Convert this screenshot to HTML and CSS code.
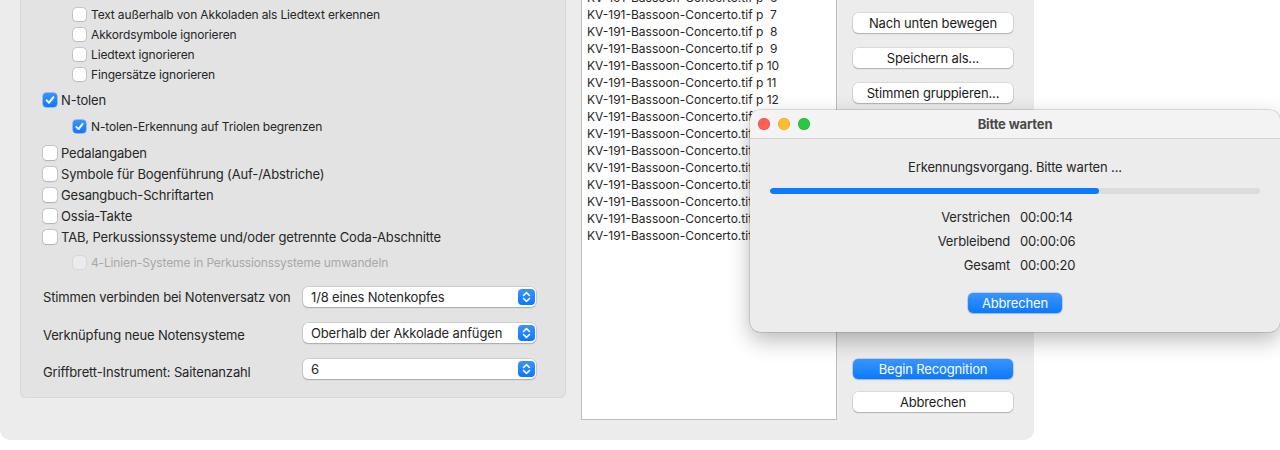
FILE: index.html
```html
<!DOCTYPE html>
<html lang="de">
<head>
<meta charset="utf-8">
<title>Erkennung</title>
<link rel="stylesheet" href="styles.css">
</head>
<body>
<div class="window">
  <div class="group">
    <div class="opts">
      <div class="row sub small r1"><span class="cb"></span><span>Text außerhalb von Akkoladen als Liedtext erkennen</span></div>
      <div class="row sub small"><span class="cb"></span><span>Akkordsymbole ignorieren</span></div>
      <div class="row sub small"><span class="cb"></span><span>Liedtext ignorieren</span></div>
      <div class="row sub small"><span class="cb"></span><span>Fingersätze ignorieren</span></div>
      <div class="row mid gap6"><span class="cb on"><svg viewBox="0 0 14 14" width="14" height="14"><path d="M3.6 7.4 L6 9.8 L10.4 4.2" fill="none" stroke="#fff" stroke-width="2" stroke-linecap="round" stroke-linejoin="round"/></svg></span><span>N-tolen</span></div>
      <div class="row sub small mid gap6"><span class="cb on"><svg viewBox="0 0 14 14" width="14" height="14"><path d="M3.6 7.4 L6 9.8 L10.4 4.2" fill="none" stroke="#fff" stroke-width="2" stroke-linecap="round" stroke-linejoin="round"/></svg></span><span>N-tolen-Erkennung auf Triolen begrenzen</span></div>
      <div class="row big gap6"><span class="cb"></span><span>Pedalangaben</span></div>
      <div class="row big"><span class="cb"></span><span>Symbole für Bogenführung (Auf-/Abstriche)</span></div>
      <div class="row big"><span class="cb"></span><span>Gesangbuch-Schriftarten</span></div>
      <div class="row big"><span class="cb"></span><span>Ossia-Takte</span></div>
      <div class="row big"><span class="cb"></span><span>TAB, Perkussionssysteme und/oder getrennte Coda-Abschnitte</span></div>
      <div class="row sub small disabled gap5"><span class="cb"></span><span>4-Linien-Systeme in Perkussionssysteme umwandeln</span></div>
    </div>
    <div class="form">
      <div class="frow">
        <span class="flabel">Stimmen verbinden bei Notenversatz von</span>
        <div class="popup"><span>1/8 eines Notenkopfes</span><span class="stepper"><svg viewBox="0 0 17 16" width="17" height="16"><path d="M5.5 6.5 L8.5 3.6 L11.5 6.5 M5.5 9.5 L8.5 12.4 L11.5 9.5" fill="none" stroke="#fff" stroke-width="1.6" stroke-linecap="round" stroke-linejoin="round"/></svg></span></div>
      </div>
      <div class="frow">
        <span class="flabel low2">Verknüpfung neue Notensysteme</span>
        <div class="popup"><span>Oberhalb der Akkolade anfügen</span><span class="stepper"><svg viewBox="0 0 17 16" width="17" height="16"><path d="M5.5 6.5 L8.5 3.6 L11.5 6.5 M5.5 9.5 L8.5 12.4 L11.5 9.5" fill="none" stroke="#fff" stroke-width="1.6" stroke-linecap="round" stroke-linejoin="round"/></svg></span></div>
      </div>
      <div class="frow">
        <span class="flabel low3">Griffbrett-Instrument: Saitenanzahl</span>
        <div class="popup"><span>6</span><span class="stepper"><svg viewBox="0 0 17 16" width="17" height="16"><path d="M5.5 6.5 L8.5 3.6 L11.5 6.5 M5.5 9.5 L8.5 12.4 L11.5 9.5" fill="none" stroke="#fff" stroke-width="1.6" stroke-linecap="round" stroke-linejoin="round"/></svg></span></div>
      </div>
    </div>
  </div>

  <div class="list">
    <div class="item first">KV-191-Bassoon-Concerto.tif p  6</div>
    <div class="item">KV-191-Bassoon-Concerto.tif p  7</div>
    <div class="item">KV-191-Bassoon-Concerto.tif p  8</div>
    <div class="item">KV-191-Bassoon-Concerto.tif p  9</div>
    <div class="item">KV-191-Bassoon-Concerto.tif p 10</div>
    <div class="item">KV-191-Bassoon-Concerto.tif p 11</div>
    <div class="item">KV-191-Bassoon-Concerto.tif p 12</div>
    <div class="item">KV-191-Bassoon-Concerto.tif p 13</div>
    <div class="item">KV-191-Bassoon-Concerto.tif p 14</div>
    <div class="item">KV-191-Bassoon-Concerto.tif p 15</div>
    <div class="item">KV-191-Bassoon-Concerto.tif p 16</div>
    <div class="item">KV-191-Bassoon-Concerto.tif p 17</div>
    <div class="item">KV-191-Bassoon-Concerto.tif p 18</div>
    <div class="item">KV-191-Bassoon-Concerto.tif p 19</div>
    <div class="item">KV-191-Bassoon-Concerto.tif p 20</div>
  </div>

  <div class="buttons">
    <div class="btn">Nach unten bewegen</div>
    <div class="btn">Speichern als...</div>
    <div class="btn">Stimmen gruppieren...</div>
    <div class="btn primary push">Begin Recognition</div>
    <div class="btn">Abbrechen</div>
  </div>
</div>

<div class="dialog">
  <div class="titlebar">
    <div class="lights"><span class="light red"></span><span class="light yellow"></span><span class="light green"></span></div>
    <div class="title">Bitte warten</div>
    <div></div>
  </div>
  <div class="dbody">
    <div class="msg">Erkennungsvorgang. Bitte warten ...</div>
    <div class="progress"><div class="fill" style="width:67.2%"></div></div>
    <div class="times">
      <span class="tl">Verstrichen</span><span class="tv">00:00:14</span>
      <span class="tl">Verbleibend</span><span class="tv">00:00:06</span>
      <span class="tl">Gesamt</span><span class="tv">00:00:20</span>
    </div>
    <div class="btn primary dbtn">Abbrechen</div>
  </div>
</div>
</body>
</html>
```

FILE: styles.css
```css
* { box-sizing: border-box; }
html, body { margin: 0; padding: 0; }
body {
  background: #ffffff;
  width: 1280px;
  height: 450px;
  overflow: hidden;
  position: relative;
  font-family: Inter, "Liberation Sans", sans-serif;
  font-size: 13px;
  color: #262626;
  letter-spacing: -0.15px;
}

.window {
  width: 1034px;
  height: 440px;
  background: #ececec;
  border-radius: 0 0 10px 10px;
  display: flex;
  align-items: flex-start;
  padding-left: 20px;
}

.group {
  width: 546px;
  height: 398px;
  background: #e3e3e3;
  border: 1px solid #d7d7d7;
  border-top: none;
  border-radius: 0 0 6px 6px;
  padding-left: 22px;
  display: flex;
  flex-direction: column;
}

.opts { display: flex; flex-direction: column; padding-top: 4px; }

.row {
  display: flex;
  align-items: center;
  gap: 4px;
  height: 21px;
  white-space: nowrap;
}
.row.small { font-size: 12px; height: 20px; }
.row.sub { padding-left: 30px; }
.row.mid { height: 20px; }
.gap6 { margin-top: 6px; }
.gap7 { margin-top: 7px; }
.gap5 { margin-top: 5px; }

.cb {
  flex: 0 0 14px;
  width: 14px;
  height: 14px;
  border-radius: 3.5px;
  background: #ffffff;
  box-shadow: 0 0 0 0.5px rgba(0,0,0,0.22), 0 0.5px 1.5px rgba(0,0,0,0.12);
  display: flex;
}
.row.small .cb { flex-basis: 13px; width: 13px; height: 13px; margin-right: 1px; }
.cb.on {
  background: linear-gradient(#3a93ff, #0a78ff);
  box-shadow: 0 0 0 0.5px rgba(0,90,220,0.6);
}
.row.small .cb.on svg { width: 13px; height: 13px; }
.disabled { color: #a8a8a8; }
.disabled .cb { background: #ebebeb; box-shadow: 0 0 0 0.5px rgba(0,0,0,0.1); }

.form { display: flex; flex-direction: column; gap: 16px; margin-top: 15px; }
.frow { display: flex; align-items: center; height: 20px; }
.flabel { flex: 0 0 260px; white-space: nowrap; }
.flabel.low2 { padding-top: 4px; }
.flabel.low3 { padding-top: 6px; }

.popup {
  width: 233px;
  height: 20px;
  background: #ffffff;
  border-radius: 5px;
  box-shadow: 0 0 0 0.5px rgba(0,0,0,0.18), 0 1px 1.5px rgba(0,0,0,0.18);
  display: flex;
  align-items: center;
  justify-content: space-between;
  padding-left: 8px;
  padding-right: 1px;
}
.stepper {
  width: 17px;
  height: 16px;
  border-radius: 4px;
  background: linear-gradient(#3a93ff, #0a78ff);
  display: flex;
}

.list {
  margin-left: 15px;
  width: 256px;
  height: 420px;
  background: #ffffff;
  border: 1px solid #bdbdbd;
  border-top: none;
  overflow: hidden;
  padding-left: 5px;
}
.item {
  height: 17px;
  line-height: 17px;
  font-size: 12px;
  letter-spacing: 0;
  white-space: pre;
  color: #262626;
}
.item.first { margin-top: -11px; }

.buttons {
  margin-left: 16px;
  width: 160px;
  height: 440px;
  display: flex;
  flex-direction: column;
  padding-top: 13px;
  padding-bottom: 28px;
  gap: 15px;
}
.btn {
  height: 20px;
  line-height: 20px;
  text-align: center;
  background: #ffffff;
  border-radius: 5px;
  box-shadow: 0 0 0 0.5px rgba(0,0,0,0.16), 0 1px 1.5px rgba(0,0,0,0.2);
  color: #1b1b1b;
  white-space: nowrap;
}
.btn.primary {
  background: linear-gradient(#3b95ff, #0a79ff);
  color: #ffffff;
  box-shadow: 0 0 0 0.5px rgba(0,80,200,0.35), 0 1px 1.5px rgba(0,0,0,0.15);
}
.btn.push { margin-top: auto; margin-bottom: -2px; }

.dialog {
  position: absolute;
  left: 750px;
  top: 110px;
  width: 530px;
  height: 222px;
  background: #ececec;
  border-radius: 10px;
  box-shadow: 0 0 0 0.5px rgba(0,0,0,0.22), 0 8px 22px rgba(0,0,0,0.28);
  overflow: hidden;
}
.titlebar {
  height: 29px;
  background: #f3f3f3;
  border-bottom: 1px solid #d2d2d2;
  display: grid;
  grid-template-columns: 1fr auto 1fr;
  align-items: center;
}
.lights { display: flex; gap: 8px; padding-left: 8px; }
.light { width: 12px; height: 12px; border-radius: 50%; }
.red { background: #fe5f57; box-shadow: inset 0 0 0 0.5px rgba(200,40,30,0.5); }
.yellow { background: #febc2e; box-shadow: inset 0 0 0 0.5px rgba(200,140,20,0.5); }
.green { background: #28c840; box-shadow: inset 0 0 0 0.5px rgba(20,140,30,0.5); }
.title { font-weight: 700; color: #4a4a4a; }

.dbody {
  display: flex;
  flex-direction: column;
  align-items: center;
  padding-top: 20px;
}
.msg { line-height: 16px; }
.progress {
  align-self: stretch;
  margin: 13px 20px 0;
  height: 6px;
  border-radius: 3px;
  background: #dcdcdc;
  overflow: hidden;
}
.fill { height: 100%; background: #0a7aff; border-radius: 3px; }
.times {
  align-self: stretch;
  display: grid;
  grid-template-columns: 1fr 1fr;
  column-gap: 10px;
  grid-auto-rows: 24px;
  align-items: center;
  margin-top: 11px;
}
.tl { text-align: right; }
.tv { text-align: left; }
.dbtn { width: 94px; margin-top: 16px; }
```
